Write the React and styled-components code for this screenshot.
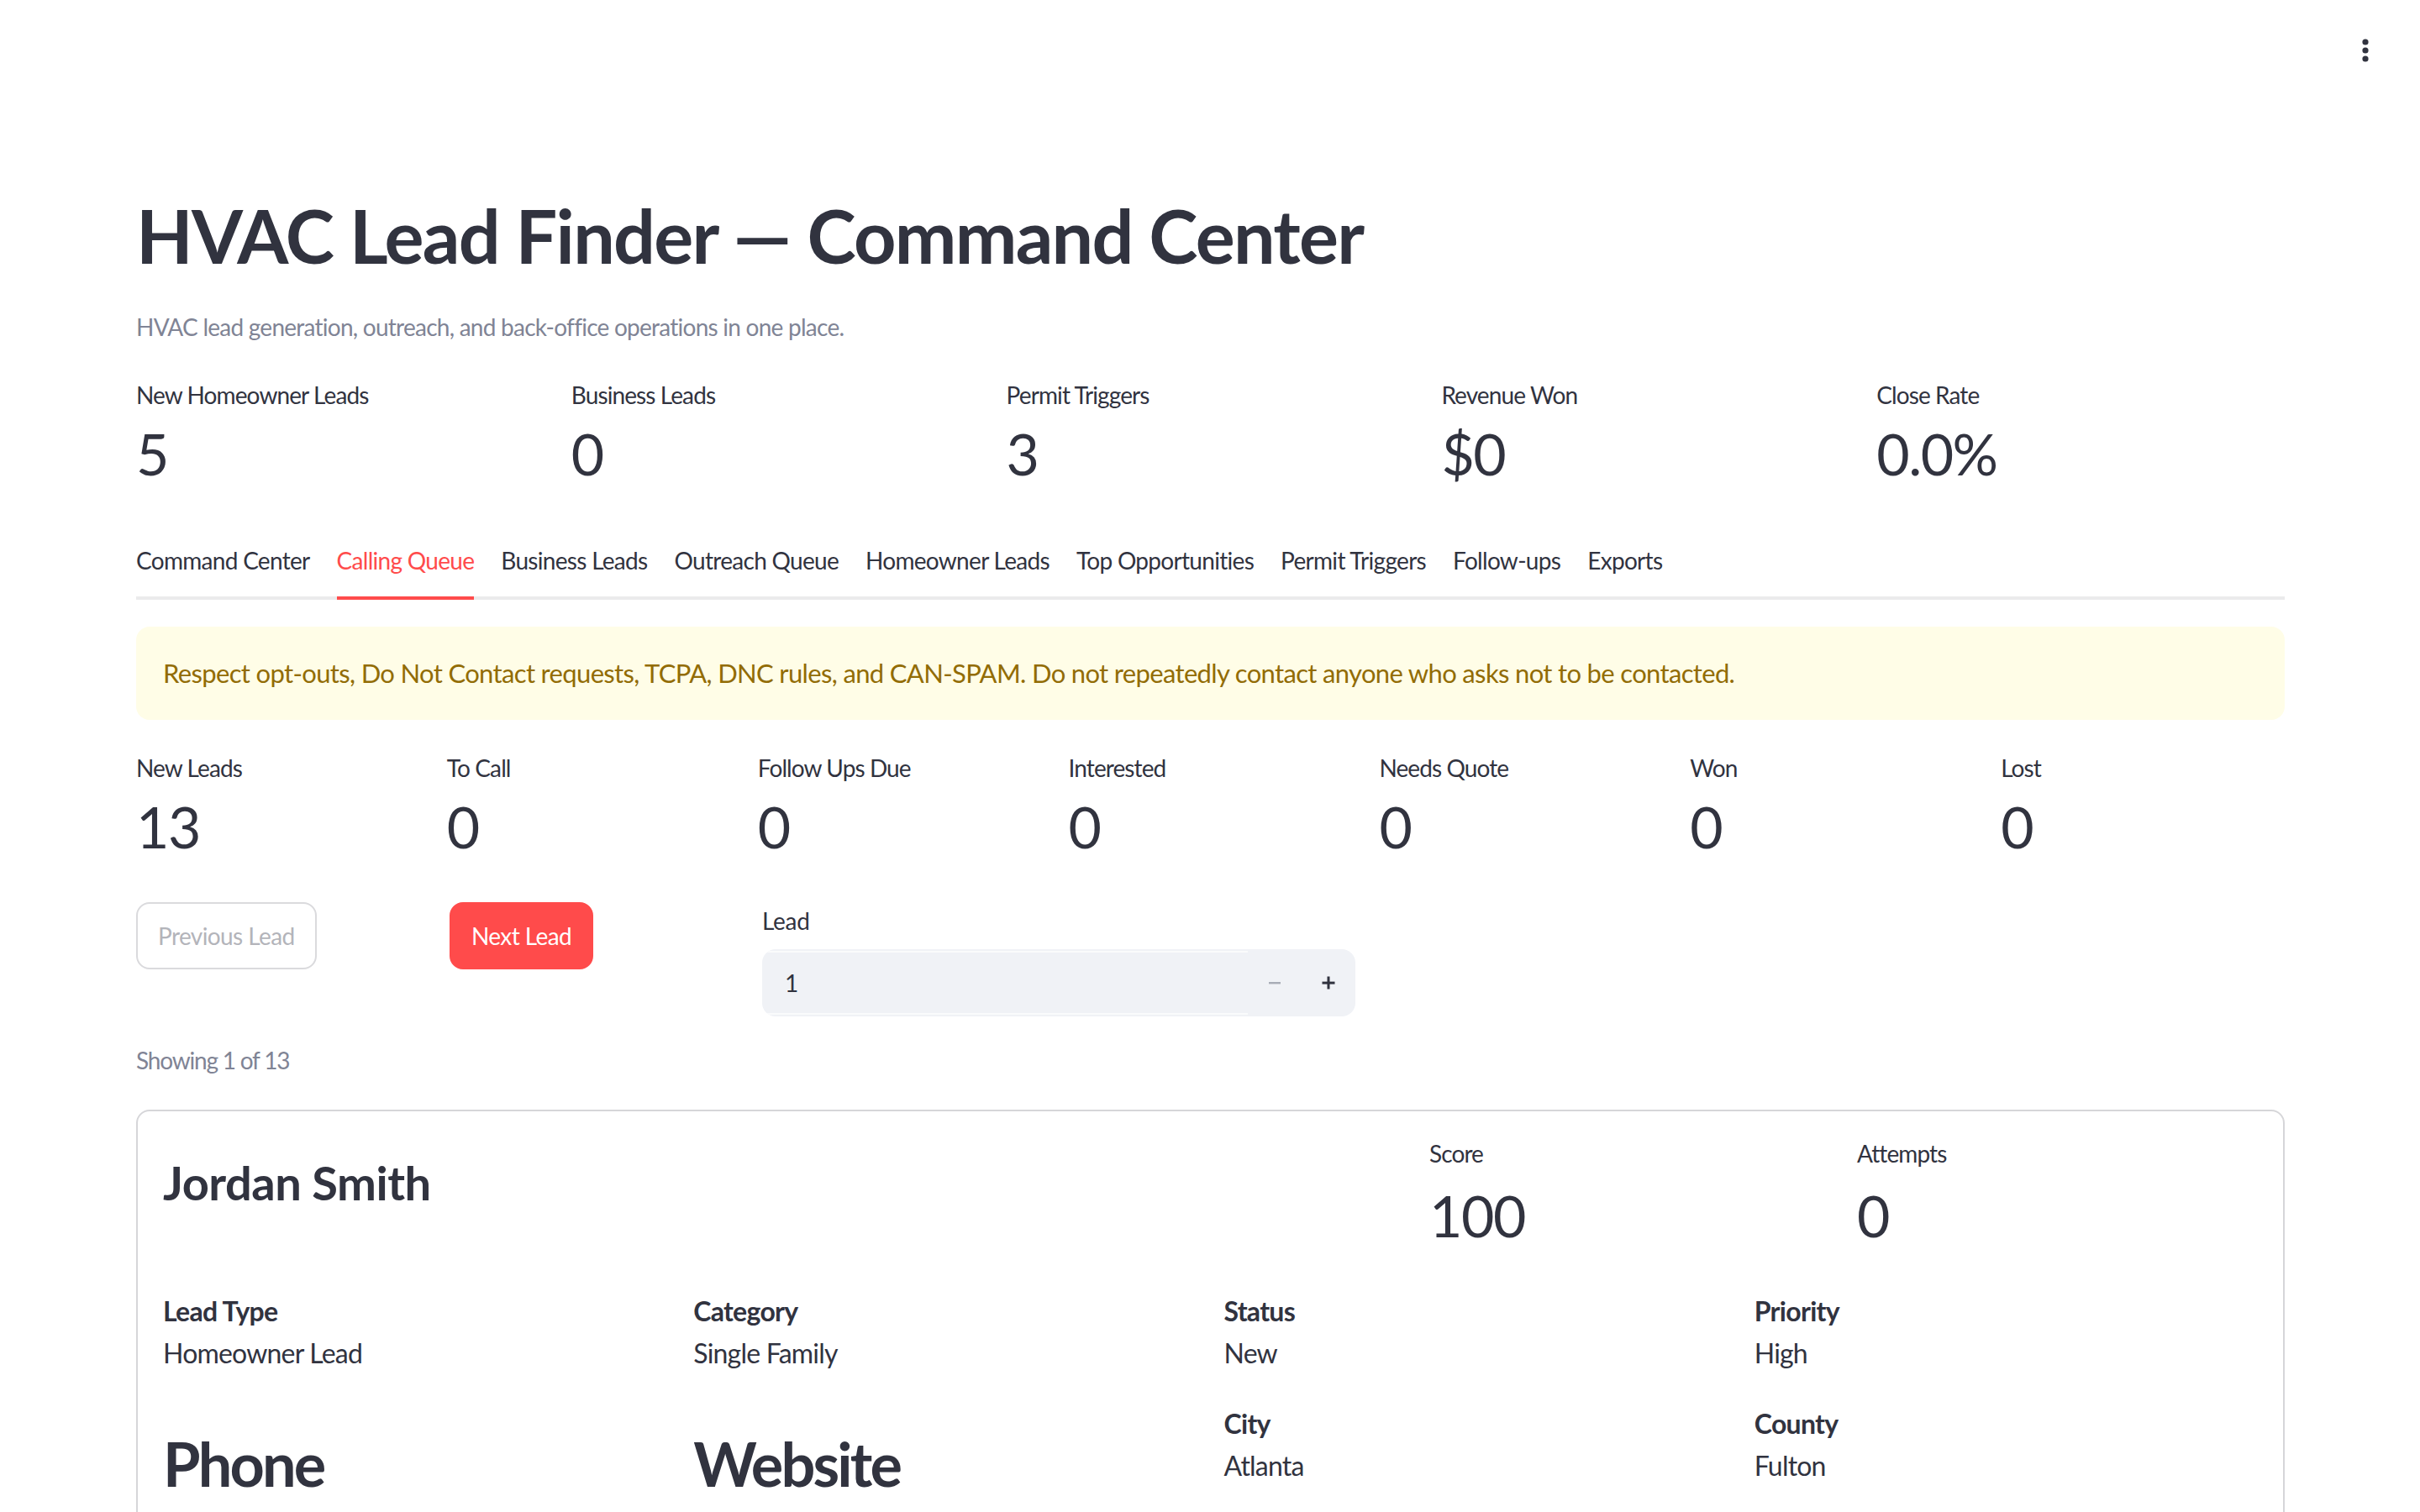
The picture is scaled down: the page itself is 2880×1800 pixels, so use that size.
import React from 'react'
import styled, { createGlobalStyle } from 'styled-components'

const GlobalStyle = createGlobalStyle`
  html, body {
    margin: 0;
    padding: 0;
    background: #fff;
  }
  body {
    font-family: Lato, "Noto Sans", sans-serif;
    color: #31333f;
  }
  * {
    box-sizing: border-box;
  }
`

const Header = styled.header`
  height: 120px;
  display: flex;
  align-items: center;
  justify-content: flex-end;
  padding-right: 60px;
`

const Main = styled.main`
  padding: 0 161px 80px 162px;
`

const Title = styled.h1`
  margin: 107px 0 0;
  font-size: 88px;
  line-height: 106px;
  font-weight: 700;
  letter-spacing: -1.75px;
  color: #31333f;
`

const Subtitle = styled.p`
  margin: 36px 0 0;
  font-size: 28px;
  line-height: 40px;
  letter-spacing: -0.75px;
  color: #808495;
`

const MetricGrid = styled.div`
  display: grid;
  grid-template-columns: repeat(${p => p.$cols}, 1fr);
  column-gap: 32px;
  margin-top: ${p => p.$top}px;
`

const Metric = styled.div`
  display: flex;
  flex-direction: column;
`

const MetricLabel = styled.div`
  font-size: 28px;
  line-height: 40px;
  letter-spacing: -0.9px;
  color: #31333f;
`

const MetricValue = styled.div`
  margin-top: ${p => p.$gap || 6}px;
  font-size: 68px;
  line-height: 88px;
  letter-spacing: -1.5px;
  color: #31333f;
`

const TabList = styled.div`
  display: flex;
  gap: 32px;
  margin-top: 63px;
  box-shadow: inset 0 -4px 0 #ebebec;
`

const Tab = styled.div`
  font-size: 28px;
  line-height: 40px;
  letter-spacing: -0.7px;
  padding-bottom: 23px;
  border-bottom: 4px solid ${p => (p.$active ? '#ff4b4b' : 'transparent')};
  color: ${p => (p.$active ? '#ff4b4b' : '#31333f')};
  white-space: nowrap;
`

const Alert = styled.div`
  margin-top: 32px;
  padding: 32px;
  border-radius: 16px;
  background: #fffde7;
  color: #926c05;
  font-size: 31px;
  line-height: 47px;
  letter-spacing: -0.66px;
`

const Controls = styled.div`
  display: grid;
  grid-template-columns: 341px 340px 706px 1fr;
  column-gap: 32px;
  align-items: start;
  margin-top: 46px;
`

const Button = styled.button`
  height: 80px;
  padding: 0 24px;
  border-radius: 16px;
  font-family: inherit;
  font-size: 28px;
  letter-spacing: -0.6px;
  border: 2px solid ${p => (p.$primary ? '#ff4b4b' : '#dadadd')};
  background: ${p => (p.$primary ? '#ff4b4b' : '#fff')};
  color: ${p => (p.$primary ? '#fff' : '#b3b4ba')};
  justify-self: start;
`

const Field = styled.div`
  display: flex;
  flex-direction: column;
`

const FieldLabel = styled.label`
  margin-top: 2px;
  font-size: 28px;
  line-height: 40px;
  letter-spacing: -0.3px;
  color: #31333f;
`

const NumberBox = styled.div`
  margin-top: 14px;
  height: 80px;
  display: flex;
  border-radius: 16px;
  background: #f0f2f6;
  overflow: hidden;
`

const NumberField = styled.div`
  flex: 1;
  margin: 2px 0;
  display: flex;
  align-items: center;
  padding-left: 27px;
  border-top: 2px solid #fafbfc;
  border-bottom: 2px solid #fafbfc;
  font-size: 28px;
  color: #31333f;
`

const StepButton = styled.div`
  width: 64px;
  display: flex;
  align-items: center;
  justify-content: center;
  color: ${p => (p.$disabled ? '#a8acb6' : '#31333f')};
`

const Caption = styled.p`
  margin: 32px 0 0;
  font-size: 28px;
  line-height: 40px;
  letter-spacing: -1.2px;
  color: #808495;
`

const Card = styled.section`
  margin-top: 39px;
  padding: 30px;
  border: 2px solid #d6d6d9;
  border-radius: 16px;
`

const CardTop = styled.div`
  display: grid;
  grid-template-columns: 1fr 477px 477px;
  column-gap: 32px;
`

const LeadName = styled.h3`
  margin: 21px 0 0;
  font-size: 56px;
  line-height: 68px;
  font-weight: 700;
  letter-spacing: -0.5px;
`

const DetailGrid = styled.div`
  display: grid;
  grid-template-columns: repeat(4, 1fr);
  column-gap: 32px;
  row-gap: 40px;
  margin-top: 48px;
`

const Detail = styled.div`
  display: flex;
  flex-direction: column;
`

const DetailLabel = styled.div`
  font-size: 32px;
  line-height: 44px;
  font-weight: 700;
  letter-spacing: -0.7px;
`

const DetailValue = styled.div`
  margin-top: 6px;
  font-size: 32px;
  line-height: 44px;
  letter-spacing: -0.8px;
`

const BigHeading = styled.h2`
  margin: 26px 0 0;
  font-size: 72px;
  line-height: 86px;
  font-weight: 700;
  letter-spacing: -2.8px;
`

const Kebab = () => (
  <svg width="10" height="30" viewBox="0 0 10 30">
    <circle cx="5" cy="5" r="3.6" fill="#31333f" />
    <circle cx="5" cy="15" r="3.6" fill="#31333f" />
    <circle cx="5" cy="25" r="3.6" fill="#31333f" />
  </svg>
)

const Minus = () => (
  <svg width="16" height="16" viewBox="0 0 16 16">
    <rect x="1" y="7" width="14" height="2.4" fill="currentColor" />
  </svg>
)

const Plus = () => (
  <svg width="18" height="18" viewBox="0 0 18 18">
    <rect x="1.5" y="7.6" width="15" height="3" fill="currentColor" />
    <rect x="7.5" y="1.5" width="3" height="15" fill="currentColor" />
  </svg>
)

const topMetrics = [
  ['New Homeowner Leads', '5'],
  ['Business Leads', '0'],
  ['Permit Triggers', '3'],
  ['Revenue Won', '$0'],
  ['Close Rate', '0.0%'],
]

const queueMetrics = [
  ['New Leads', '13'],
  ['To Call', '0'],
  ['Follow Ups Due', '0'],
  ['Interested', '0'],
  ['Needs Quote', '0'],
  ['Won', '0'],
  ['Lost', '0'],
]

const tabs = [
  'Command Center',
  'Calling Queue',
  'Business Leads',
  'Outreach Queue',
  'Homeowner Leads',
  'Top Opportunities',
  'Permit Triggers',
  'Follow-ups',
  'Exports',
]

const details = [
  ['Lead Type', 'Homeowner Lead'],
  ['Category', 'Single Family'],
  ['Status', 'New'],
  ['Priority', 'High'],
]

export default function App() {
  return (
    <>
      <GlobalStyle />
      <Header>
        <Kebab />
      </Header>
      <Main>
        <Title>HVAC Lead Finder — Command Center</Title>
        <Subtitle>HVAC lead generation, outreach, and back-office operations in one place.</Subtitle>

        <MetricGrid $cols={5} $top={41}>
          {topMetrics.map(([label, value]) => (
            <Metric key={label}>
              <MetricLabel>{label}</MetricLabel>
              <MetricValue>{value}</MetricValue>
            </Metric>
          ))}
        </MetricGrid>

        <TabList>
          {tabs.map(t => (
            <Tab key={t} $active={t === 'Calling Queue'}>{t}</Tab>
          ))}
        </TabList>

        <Alert>
          Respect opt-outs, Do Not Contact requests, TCPA, DNC rules, and CAN-SPAM. Do not repeatedly contact anyone who asks not to be contacted.
        </Alert>

        <MetricGrid $cols={7} $top={37}>
          {queueMetrics.map(([label, value]) => (
            <Metric key={label}>
              <MetricLabel>{label}</MetricLabel>
              <MetricValue>{value}</MetricValue>
            </Metric>
          ))}
        </MetricGrid>

        <Controls>
          <Button disabled>Previous Lead</Button>
          <Button $primary>Next Lead</Button>
          <Field>
            <FieldLabel>Lead</FieldLabel>
            <NumberBox>
              <NumberField>1</NumberField>
              <StepButton $disabled><Minus /></StepButton>
              <StepButton><Plus /></StepButton>
            </NumberBox>
          </Field>
        </Controls>

        <Caption>Showing 1 of 13</Caption>

        <Card>
          <CardTop>
            <LeadName>Jordan Smith</LeadName>
            <Metric>
              <MetricLabel>Score</MetricLabel>
              <MetricValue $gap={10}>100</MetricValue>
            </Metric>
            <Metric>
              <MetricLabel>Attempts</MetricLabel>
              <MetricValue $gap={10}>0</MetricValue>
            </Metric>
          </CardTop>
          <DetailGrid>
            {details.map(([label, value]) => (
              <Detail key={label}>
                <DetailLabel>{label}</DetailLabel>
                <DetailValue>{value}</DetailValue>
              </Detail>
            ))}
            <BigHeading>Phone</BigHeading>
            <BigHeading>Website</BigHeading>
            <Detail>
              <DetailLabel>City</DetailLabel>
              <DetailValue>Atlanta</DetailValue>
            </Detail>
            <Detail>
              <DetailLabel>County</DetailLabel>
              <DetailValue>Fulton</DetailValue>
            </Detail>
          </DetailGrid>
        </Card>
      </Main>
    </>
  )
}
